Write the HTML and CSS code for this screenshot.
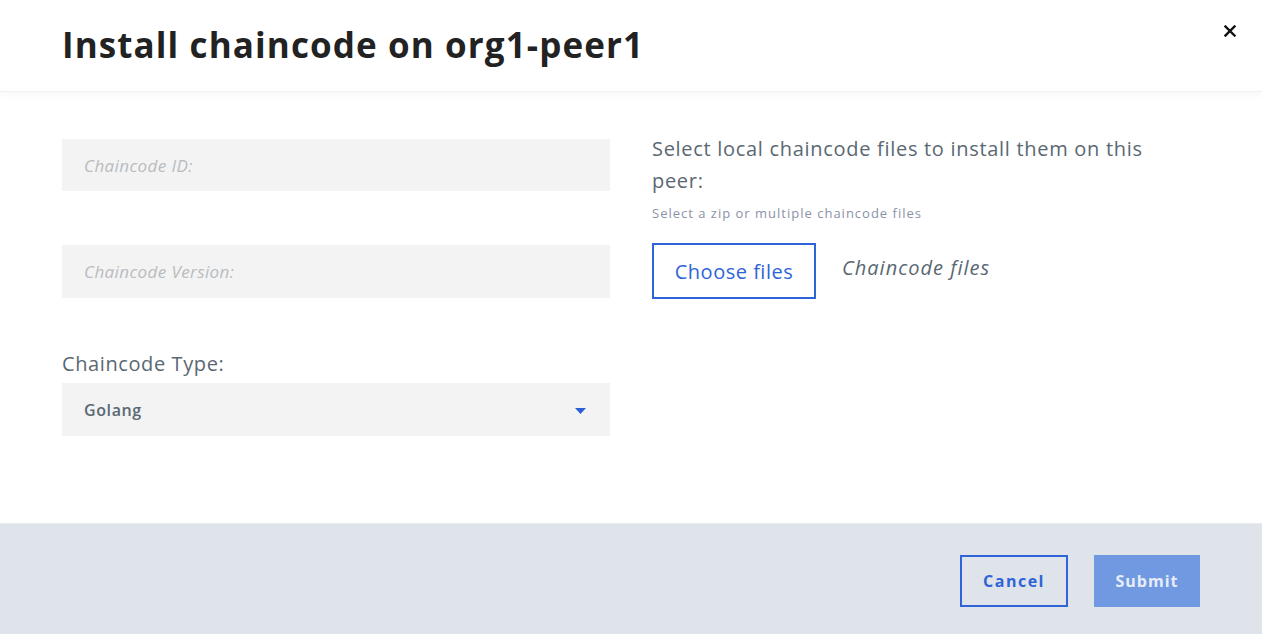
FILE: index.html
```html
<!DOCTYPE html>
<html>
<head>
<meta charset="utf-8">
<link rel="stylesheet" href="styles.css">
</head>
<body>
<div class="modal">
  <header class="modal-header">
    <h1 class="title">Install chaincode on org1-peer1</h1>
    <button class="close" aria-label="close">
      <svg width="12" height="12" viewBox="0 0 12 12"><path d="M1.5 1.5 L10.5 10.5 M10.5 1.5 L1.5 10.5" stroke="#111" stroke-width="2.4" stroke-linecap="square"/></svg>
    </button>
  </header>
  <main class="modal-body">
    <div class="col left">
      <div class="input"><span class="placeholder">Chaincode ID:</span></div>
      <div class="input second"><span class="placeholder">Chaincode Version:</span></div>
      <label class="label">Chaincode Type:</label>
      <div class="select">
        <span class="select-value">Golang</span>
        <svg class="caret" width="11" height="6" viewBox="0 0 11 6"><path d="M0 0 H11 L5.5 6 Z" fill="#2a5fd8"/></svg>
      </div>
    </div>
    <div class="col right">
      <p class="desc">Select local chaincode files to install them on this peer:</p>
      <p class="hint">Select a zip or multiple chaincode files</p>
      <div class="file-row">
        <button class="btn-outline choose">Choose files</button>
        <span class="files">Chaincode files</span>
      </div>
    </div>
  </main>
  <footer class="modal-footer">
    <button class="btn-outline cancel">Cancel</button>
    <button class="btn-primary">Submit</button>
  </footer>
</div>
</body>
</html>
```

FILE: styles.css
```css
* { box-sizing: border-box; }
html, body { margin: 0; padding: 0; }
body {
  width: 1262px;
  height: 634px;
  overflow: hidden;
  background: #fff;
  font-family: "Open Sans", "Liberation Sans", sans-serif;
  color: #5a6872;
}
.modal {
  display: flex;
  flex-direction: column;
  height: 634px;
}
.modal-header {
  height: 91px;
  flex: none;
  display: flex;
  align-items: flex-start;
  justify-content: space-between;
  padding: 0 26px 0 62px;
  background: #fff;
  position: relative;
  z-index: 1;
  box-shadow: 0 1px 0 #eef0f2, 0 3px 8px rgba(0,0,0,0.04);
}
.title {
  margin: 0;
  padding-top: 24px;
  font-size: 35px;
  font-weight: 700;
  color: #222;
  line-height: 42px;
  letter-spacing: 1.1px;
}
.close {
  margin-top: 25px;
  width: 12px;
  height: 12px;
  padding: 0;
  border: none;
  background: none;
  display: flex;
}
.modal-body {
  flex: 1;
  display: flex;
  gap: 42px;
  padding: 0 62px;
}
.col { flex: 1; }
.left { padding-top: 48px; }
.input {
  height: 52px;
  background: #f3f3f3;
  display: flex;
  align-items: center;
  padding-left: 22px;
}
.input.second { margin-top: 54px; height: 53px; }
.placeholder {
  font-style: italic;
  font-size: 17px;
  letter-spacing: 0.4px;
  color: #b8bcc0;
}
.label {
  display: block;
  margin-top: 52px;
  font-size: 20px;
  line-height: 28px;
  height: 33px;
  letter-spacing: 0.6px;
  color: #5a6872;
}
.select {
  height: 53px;
  background: #f3f3f3;
  display: flex;
  align-items: center;
  justify-content: space-between;
  padding: 0 24px 0 22px;
}
.select-value {
  font-size: 16px;
  font-weight: 600;
  letter-spacing: 0.6px;
  color: #5a6872;
}
.caret { margin-top: 2px; }
.right { padding-top: 42px; }
.desc {
  margin: 0;
  font-size: 20px;
  line-height: 32px;
  letter-spacing: 0.7px;
  color: #5a6872;
  max-width: 505px;
}
.hint {
  margin: 7px 0 0;
  font-size: 13px;
  line-height: 18px;
  letter-spacing: 1px;
  color: #8a92a8;
}
.file-row {
  margin-top: 21px;
  display: flex;
  align-items: center;
  gap: 26px;
}
.btn-outline {
  background: transparent;
  border: 2px solid #2f64d8;
  color: #2f64d8;
  font-family: inherit;
  cursor: pointer;
}
.choose {
  width: 164px;
  height: 56px;
  font-size: 20px;
  letter-spacing: 0.5px;
  padding: 0;
}
.files {
  font-style: italic;
  font-size: 20px;
  letter-spacing: 1px;
  color: #5a6872;
  margin-top: -7px;
}
.modal-footer {
  height: 111px;
  flex: none;
  background: #dfe4ea;
  display: flex;
  justify-content: flex-end;
  align-items: flex-start;
  gap: 26px;
  padding: 31px 62px 0 0;
  border-top: 1px solid #e8ebee;
}
.cancel {
  width: 108px;
  height: 52px;
  font-size: 16px;
  font-weight: 700;
  letter-spacing: 1.5px;
}
.btn-primary {
  width: 106px;
  height: 52px;
  border: none;
  background: #7099e1;
  color: #e6edf9;
  font-family: inherit;
  font-size: 16px;
  font-weight: 700;
  letter-spacing: 1px;
}
```
